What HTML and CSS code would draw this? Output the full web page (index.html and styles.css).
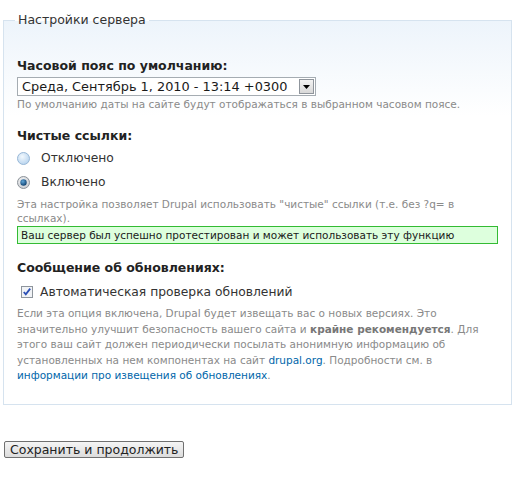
FILE: index.html
```html
<!DOCTYPE html>
<html lang="ru">
<head>
<meta charset="utf-8">
<title>Настройки сервера</title>
<link rel="stylesheet" href="styles.css">
</head>
<body>
<form class="form">
  <fieldset class="group">
    <legend class="group-title">Настройки сервера</legend>

    <div class="item item-first">
      <label class="item-label">Часовой пояс по умолчанию:</label>
      <div class="select-wrap">
        <select class="select">
          <option>Среда, Сентябрь 1, 2010 - 13:14 +0300</option>
        </select>
        <span class="select-arrow">
          <svg width="7" height="4" viewBox="0 0 7 4"><path d="M0 0h7L3.5 4z" fill="#000"/></svg>
        </span>
      </div>
      <div class="desc desc-first">По умолчанию даты на сайте будут отображаться в выбранном часовом поясе.</div>
    </div>

    <div class="item">
      <label class="item-label">Чистые ссылки:</label>
      <div class="options">
        <div class="option">
          <svg class="radio" width="13" height="13" viewBox="0 0 13 13">
            <defs>
              <radialGradient id="rg1" cx="0.4" cy="0.35" r="0.7">
                <stop offset="0" stop-color="#f2f8fd"/>
                <stop offset="1" stop-color="#b6d3ee"/>
              </radialGradient>
            </defs>
            <circle cx="6.5" cy="6.5" r="6" fill="url(#rg1)" stroke="#98b7d6"/>
          </svg>
          <span class="option-text">Отключено</span>
        </div>
        <div class="option">
          <svg class="radio" width="13" height="13" viewBox="0 0 13 13">
            <defs>
              <radialGradient id="rg2" cx="0.4" cy="0.35" r="0.7">
                <stop offset="0" stop-color="#f4f4f4"/>
                <stop offset="1" stop-color="#c8ccd2"/>
              </radialGradient>
              <radialGradient id="rg3" cx="0.4" cy="0.35" r="0.7">
                <stop offset="0" stop-color="#5fa5d8"/>
                <stop offset="1" stop-color="#0a3b6a"/>
              </radialGradient>
            </defs>
            <circle cx="6.5" cy="6.5" r="6" fill="url(#rg2)" stroke="#8c9299"/>
            <circle cx="6.5" cy="6.5" r="3.2" fill="url(#rg3)"/>
          </svg>
          <span class="option-text">Включено</span>
        </div>
      </div>
      <div class="desc desc-tight">Эта настройка позволяет Drupal использовать "чистые" ссылки (т.е. без ?q= в ссылках).</div>
      <div class="ok-box">Ваш сервер был успешно протестирован и может использовать эту функцию</div>
    </div>

    <div class="item item-last">
      <label class="item-label">Сообщение об обновлениях:</label>
      <div class="option option-check">
        <svg class="check" width="12" height="12" viewBox="0 0 12 12">
          <rect x="0.5" y="0.5" width="11" height="11" fill="#f1f3f6" stroke="#8e959c"/>
          <path d="M2.8 6l2 2.4L9.2 2.6" fill="none" stroke="#2b4fb5" stroke-width="1.8"/>
        </svg>
        <span class="option-text">Автоматическая проверка обновлений</span>
      </div>
      <div class="desc desc-long">Если эта опция включена, Drupal будет извещать вас о новых версиях. Это значительно улучшит безопасность вашего сайта и <strong>крайне рекомендуется</strong>. Для этого ваш сайт должен периодически посылать анонимную информацию об установленных на нем компонентах на сайт <a href="#">drupal.org</a>. Подробности см. в <a href="#">информации про извещения об обновлениях</a>.</div>
    </div>
  </fieldset>

  <div class="actions">
    <button type="button" class="btn">Сохранить и продолжить</button>
  </div>
</form>
</body>
</html>
```

FILE: styles.css
```css
html, body {
  margin: 0;
  padding: 0;
  background: #fff;
}

body {
  font-family: "DejaVu Sans", Verdana, sans-serif;
  color: #262626;
  padding-top: 12px;
}

.group {
  margin: 0 6px 0 3px;
  padding: 10px 13px 20px 13px;
  border: 1px solid #d6e3ef;
  background: linear-gradient(to bottom, #edf4fb 0px, #ffffff 95px);
  min-width: 0;
}

.group-title {
  font-size: 12.5px;
  line-height: 16px;
  padding: 0 3px;
  margin-left: -2px;
  color: #333;
}

.item {
  margin: 16px 0 0 0;
}

.item-first {
  margin-top: 20px;
}

.item-last {
  margin-top: 16px;
}

.item-label {
  display: block;
  font-size: 12.5px;
  font-weight: bold;
  line-height: 16px;
  color: #222;
  margin-bottom: 3px;
}

.select-wrap {
  position: relative;
  width: 299px;
  height: 19px;
}

.select {
  appearance: none;
  -webkit-appearance: none;
  width: 299px;
  height: 19px;
  box-sizing: border-box;
  border: 1px solid #a5acb2;
  border-radius: 0;
  background: #fff;
  font-family: "DejaVu Sans", Verdana, sans-serif;
  font-size: 12.9px;
  color: #1a1a1a;
  padding: 0 0 0 4px;
  margin: 0;
  display: block;
}

.select-arrow {
  position: absolute;
  right: 2px;
  top: 2px;
  width: 15px;
  height: 15px;
  box-sizing: border-box;
  border: 1px solid #8f959c;
  background: linear-gradient(#f3f3f3, #d8d8d8);
  display: flex;
  align-items: center;
  justify-content: center;
}

.desc {
  font-size: 10.5px;
  line-height: 15px;
  color: #8a8a8a;
  margin-top: 3px;
}

.desc-first {
  margin-top: 1px;
}

.desc-tight {
  margin-top: 3px;
  line-height: 14px;
}

.desc-long {
  line-height: 15.5px;
  margin-top: 2px;
}

.desc strong {
  color: #777;
}

.desc a {
  color: #0066aa;
  text-decoration: none;
}

.options {
  margin-top: -1px;
}

.option {
  display: flex;
  align-items: center;
  gap: 11px;
  padding-left: 0;
  height: 24px;
}

.option-check {
  gap: 7px;
  padding-left: 4px;
  margin-top: 4px;
}

.option-text {
  font-size: 12.3px;
  color: #333;
}

.ok-box {
  margin-top: 1px;
  border: 1px solid #33bb33;
  background: #ddffdd;
  font-size: 10.5px;
  line-height: 16px;
  padding: 0 3px;
  color: #1a1a1a;
}

.actions {
  margin-top: 34px;
  padding-left: 4px;
}

.btn {
  font-family: "DejaVu Sans", Verdana, sans-serif;
  font-size: 12.5px;
  color: #222;
  border: 1px solid #707070;
  border-radius: 2px;
  background: linear-gradient(#f5f5f5, #dcdcdc);
  padding: 0 5px;
  height: 17px;
  line-height: 14px;
}
```
